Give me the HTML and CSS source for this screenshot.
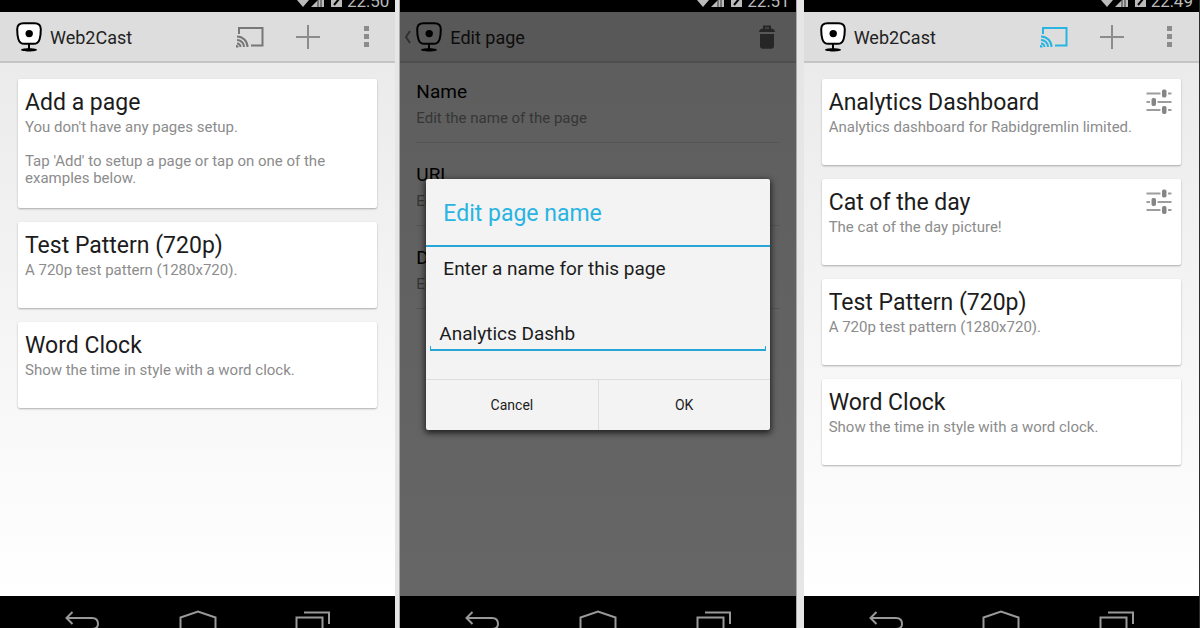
FILE: index.html
```html
<!DOCTYPE html>
<html lang="en">
<head>
  <meta charset="UTF-8">
  <meta name="viewport" content="width=device-width, initial-scale=1.0">
  <title>Web2Cast</title>
  <link rel="stylesheet" href="styles.css">
</head>

<body>
  <svg class="sprite" aria-hidden="true">
    <symbol id="logo" viewBox="0 0 26 30">
      <path d="M7.500 1.200h11c4.200 0 6.300 2 6.300 6 0 4-.3 7-1.200 10-1 3.200-2.800 4.600-6 4.600H8.400c-3.200 0-5-1.400-6-4.600-.9-3-1.200-6-1.200-10 0-4 2.100-6 6.300-6z" class="logo-face"/>
      <circle cx="13.200" cy="11.600" r="3.700"/>
      <path d="M12 22h2v4.200c4 .1 7 .7 7 1.600 0 1.200-3.600 1.700-8 1.700s-8-.5-8-1.700c0-.9 3-1.500 7-1.600z"/>
    </symbol>
    <symbol id="cast" viewBox="0 0 28 22">
      <path d="M3 8V2h23.500v17.500H15" class="line"/>
      <path d="M1 17.500a3.500 3.500 0 0 1 3.500 3.500M1 14a7 7 0 0 1 7 7M1 10.500A10.500 10.500 0 0 1 11.500 21" class="line"/>
      <path d="M0 19a2.200 2.200 0 0 1 2.500 2.500H0z" fill="currentColor"/>
    </symbol>
    <symbol id="plus" viewBox="0 0 24 24">
      <path d="M12 0v24M0 12h24" class="line"/>
    </symbol>
    <symbol id="more" viewBox="0 0 5 21">
      <path d="M0 0h5v5H0zM0 8h5v5H0zM0 16h5v5H0z" fill="currentColor"/>
    </symbol>
    <symbol id="trash" viewBox="0 0 16 24">
      <path d="M5 4V1.500h6V4" class="line"/>
      <path d="M0 7c0-2 2-3.500 4-3.500h8c2 0 4 1.500 4 3.500zM1 9h14v12c0 1.800-1 2.800-2.800 2.800H3.800C2 23.800 1 22.800 1 21z" fill="currentColor"/>
    </symbol>
    <symbol id="sliders" viewBox="0 0 26 26">
      <path d="M0.500 4.500h14M22 4.500h3.500M0.500 13h3.500M11.500 13h14M0.500 21h14M22 21h3.500" class="line track"/>
      <rect x="16.500" y="1" width="3.500" height="7" rx="1" class="knob"/>
      <rect x="6" y="9.500" width="3.500" height="7" rx="1" class="knob"/>
      <rect x="16.500" y="17.500" width="3.500" height="7" rx="1" class="knob"/>
    </symbol>
    <symbol id="signals" viewBox="0 0 46 16">
      <path d="M0 9q6-4 12 0l-6 7z" fill="currentColor"/>
      <path d="M14 16L27 3v13z" fill="currentColor"/>
      <path d="M21 8v8M24 5v11" stroke="#333"/>
      <path d="M34 2h11v14H34z" fill="currentColor"/>
      <path d="M42 8l-5 6" stroke="#000" stroke-width="2"/>
    </symbol>
    <symbol id="nav-back" viewBox="0 0 36 20">
      <path d="M8.500 2L2.500 8l6 6M3 8h25c4 0 6 2.500 6 6s-2 5-6 5H18" class="line"/>
    </symbol>
    <symbol id="nav-home" viewBox="0 0 38 20">
      <path d="M1.500 24V7.500L19 1.500l17.500 6V24" class="line"/>
    </symbol>
    <symbol id="nav-recent" viewBox="0 0 36 20">
      <path d="M9 2.500h25V14M1.500 24V7.500h26V24" class="line"/>
    </symbol>
  </svg>

  <div class="screens">
    <section class="phone">
      <div class="status">
        <svg class="signals"><use href="#signals"/></svg>
        <span>22:50</span>
      </div>
      <header class="bar">
        <a class="brand" href="#home"><svg class="logo"><use href="#logo"/></svg>Web2Cast</a>
        <button class="action" aria-label="Cast"><svg class="cast"><use href="#cast"/></svg></button>
        <button class="action light" aria-label="Add"><svg class="plus"><use href="#plus"/></svg></button>
        <button class="action light" aria-label="More"><svg class="more"><use href="#more"/></svg></button>
      </header>
      <main class="content cards">
        <article class="card">
          <h2>Add a page</h2>
          <p>You don't have any pages setup.<br><br>Tap 'Add' to setup a page or tap on one of the examples below.</p>
        </article>
        <article class="card">
          <h2>Test Pattern (720p)</h2>
          <p>A 720p test pattern (1280x720).</p>
        </article>
        <article class="card">
          <h2>Word Clock</h2>
          <p>Show the time in style with a word clock.</p>
        </article>
      </main>
      <nav class="keys">
        <button aria-label="Back"><svg><use href="#nav-back"/></svg></button>
        <button aria-label="Home"><svg><use href="#nav-home"/></svg></button>
        <button aria-label="Recent apps"><svg><use href="#nav-recent"/></svg></button>
      </nav>
    </section>

    <section class="phone">
      <div class="status">
        <svg class="signals"><use href="#signals"/></svg>
        <span>22:51</span>
      </div>
      <div class="window">
        <header class="bar">
          <a class="brand" href="#back">
            <svg class="up" viewBox="0 0 6 14"><path d="M5 1L1 7l4 6" class="line"/></svg>
            <svg class="logo"><use href="#logo"/></svg>Edit page
          </a>
          <button class="action dark" aria-label="Delete"><svg class="trash"><use href="#trash"/></svg></button>
        </header>
        <main class="content settings">
          <div class="setting">
            <h3>Name</h3>
            <p>Edit the name of the page</p>
          </div>
          <div class="setting">
            <h3>URL</h3>
            <p>Edit the URL</p>
          </div>
          <div class="setting">
            <h3>Description</h3>
            <p>Edit the description</p>
          </div>
        </main>
        <div class="overlay">
          <form class="dialog" role="dialog" aria-labelledby="dialog-title">
            <h2 id="dialog-title">Edit page name</h2>
            <label for="page-name">Enter a name for this page</label>
            <div class="field">
              <input id="page-name" type="text" value="Analytics Dashb">
            </div>
            <div class="buttons">
              <button type="button">Cancel</button>
              <button type="button">OK</button>
            </div>
          </form>
        </div>
      </div>
      <nav class="keys">
        <button aria-label="Back"><svg><use href="#nav-back"/></svg></button>
        <button aria-label="Home"><svg><use href="#nav-home"/></svg></button>
        <button aria-label="Recent apps"><svg><use href="#nav-recent"/></svg></button>
      </nav>
    </section>

    <section class="phone">
      <div class="status">
        <svg class="signals"><use href="#signals"/></svg>
        <span>22:49</span>
      </div>
      <header class="bar">
        <a class="brand" href="#home"><svg class="logo"><use href="#logo"/></svg>Web2Cast</a>
        <button class="action active" aria-label="Cast"><svg class="cast"><use href="#cast"/></svg></button>
        <button class="action light" aria-label="Add"><svg class="plus"><use href="#plus"/></svg></button>
        <button class="action light" aria-label="More"><svg class="more"><use href="#more"/></svg></button>
      </header>
      <main class="content cards">
        <article class="card">
          <h2>Analytics Dashboard</h2>
          <p>Analytics dashboard for Rabidgremlin limited.</p>
          <button class="edit" aria-label="Edit"><svg><use href="#sliders"/></svg></button>
        </article>
        <article class="card">
          <h2>Cat of the day</h2>
          <p>The cat of the day picture!</p>
          <button class="edit" aria-label="Edit"><svg><use href="#sliders"/></svg></button>
        </article>
        <article class="card">
          <h2>Test Pattern (720p)</h2>
          <p>A 720p test pattern (1280x720).</p>
        </article>
        <article class="card">
          <h2>Word Clock</h2>
          <p>Show the time in style with a word clock.</p>
        </article>
      </main>
      <nav class="keys">
        <button aria-label="Back"><svg><use href="#nav-back"/></svg></button>
        <button aria-label="Home"><svg><use href="#nav-home"/></svg></button>
        <button aria-label="Recent apps"><svg><use href="#nav-recent"/></svg></button>
      </nav>
    </section>
  </div>
</body>
</html>
```

FILE: styles.css
```css
* {
  box-sizing: border-box;
}

body {
  margin: 0;
  font-family: Roboto, sans-serif;
  color: #1c1c1c;
  background: #e6e6e6;
}

h2,
h3,
p {
  margin: 0;
  font-weight: 400;
}

button {
  padding: 0;
  border: none;
  background: none;
  font-family: inherit;
  color: inherit;
  cursor: pointer;
}

svg {
  display: block;
}

.sprite {
  position: absolute;
  width: 0;
  height: 0;
}

.line {
  fill: none;
  stroke: currentColor;
  stroke-width: 2;
}

.logo-face {
  fill: var(--face, #fff);
  stroke: #000;
  stroke-width: 2;
}

.track {
  opacity: 0.8;
}

.knob {
  fill: currentColor;
  stroke: currentColor;
}

.screens {
  display: flex;
  min-height: 100vh;
  border-right: 1px solid #26302b;
}

.phone {
  flex: 1;
  display: flex;
  flex-direction: column;
}

.phone:nth-child(2) {
  margin: 0 8px 0 5px;
  box-shadow: 0 0 0 1px #aaa;
}

/* status bar */
.status {
  display: flex;
  justify-content: flex-end;
  align-items: flex-end;
  gap: 4px;
  height: 12px;
  padding: 0 6px 5px 0;
  overflow: hidden;
  background: #000;
  color: #bbb;
  font-size: 17px;
  line-height: 12px;
}

.signals {
  width: 46px;
  height: 16px;
  flex: none;
}

/* action bar */
.bar {
  display: flex;
  height: 51px;
  border-bottom: 2px solid #c4c4c4;
  background: #ddd;
}

.brand {
  position: relative;
  flex: 1;
  display: flex;
  align-items: center;
  gap: 8px;
  padding: 1px 0 0 16px;
  font-size: 18px;
  color: #222;
  text-decoration: none;
}

.logo {
  width: 26px;
  height: 30px;
}

.up {
  position: absolute;
  left: 5px;
  width: 6px;
  height: 14px;
  color: #777;
}

.action {
  display: flex;
  align-items: center;
  justify-content: center;
  width: 58px;
  color: #777;
}

.action.light {
  color: #8c8c8c;
}

.action.dark {
  color: #606060;
}

.action.active {
  color: #29b4e2;
}

.cast {
  width: 28px;
  height: 22px;
}

.plus {
  width: 24px;
  height: 24px;
}

.more {
  width: 5px;
  height: 21px;
}

.trash {
  width: 16px;
  height: 24px;
}

.content {
  flex: 1;
  background: linear-gradient(#ebebeb, #fff);
}

/* cards */
.cards {
  display: flex;
  flex-direction: column;
  gap: 14px;
  padding: 16px 18px;
}

.card {
  position: relative;
  min-height: 86px;
  padding: 10px 40px 21px 7px;
  border-radius: 2px;
  background: #fff;
  box-shadow: 0 1px 2px rgba(0, 0, 0, 0.3);
}

.card h2 {
  margin-bottom: 2px;
  font-size: 23px;
  line-height: 28px;
}

.card p {
  font-size: 15px;
  line-height: 17px;
  color: #8c8c8c;
}

.edit {
  position: absolute;
  top: 10px;
  right: 9px;
  color: #858585;
}

.edit svg {
  width: 26px;
  height: 26px;
}

/* edit page */
.window {
  --face: transparent;
  position: relative;
  flex: 1;
  display: flex;
  flex-direction: column;
}

.settings {
  padding: 0 16px;
}

.setting {
  padding: 20px 0 15px;
  border-bottom: 1px solid #d8d8d8;
}

.setting:first-child {
  padding-top: 17px;
}

.setting h3 {
  margin-bottom: 6px;
  font-size: 19px;
  line-height: 24px;
  color: #000;
}

.setting p {
  font-size: 15px;
  line-height: 17px;
  color: #888;
}

.overlay {
  position: absolute;
  inset: 0;
  display: flex;
  align-items: center;
  padding: 0 26px;
  background: rgba(0, 0, 0, 0.6);
}

.dialog {
  flex: 1;
  border-radius: 2px;
  background: #f3f3f3;
  box-shadow: 0 2px 6px 1px rgba(0, 0, 0, 0.7);
}

.dialog h2 {
  padding: 4px 17px 0;
  border-bottom: 2px solid #27a5d6;
  font-size: 23px;
  line-height: 62px;
  color: #29b4e2;
}

.dialog label {
  display: block;
  padding: 10px 17px 34px;
  font-size: 19px;
  line-height: 24px;
}

.field {
  padding: 0 4px;
}

.field input {
  width: 100%;
  height: 36px;
  padding: 2px 9px 0;
  border: none;
  outline: none;
  background:
    linear-gradient(#27a5d6, #27a5d6) left bottom / 1px 5px no-repeat,
    linear-gradient(#27a5d6, #27a5d6) right bottom / 1px 5px no-repeat,
    linear-gradient(#27a5d6, #27a5d6) left bottom / 100% 2px no-repeat;
  font-family: inherit;
  font-size: 19px;
  color: #1c1c1c;
}

.buttons {
  display: flex;
  margin-top: 28px;
  border-top: 1px solid #ddd;
}

.buttons button {
  flex: 1;
  height: 50px;
  font-size: 14px;
}

.buttons button + button {
  border-left: 1px solid #ddd;
}

/* navigation keys */
.keys {
  display: flex;
  height: 32px;
  padding: 14px 24px 0;
  overflow: hidden;
  background: #000;
  color: #999;
}

.keys button {
  flex: 1;
  display: flex;
  justify-content: center;
}

.keys svg {
  width: 38px;
  height: 20px;
}
```
